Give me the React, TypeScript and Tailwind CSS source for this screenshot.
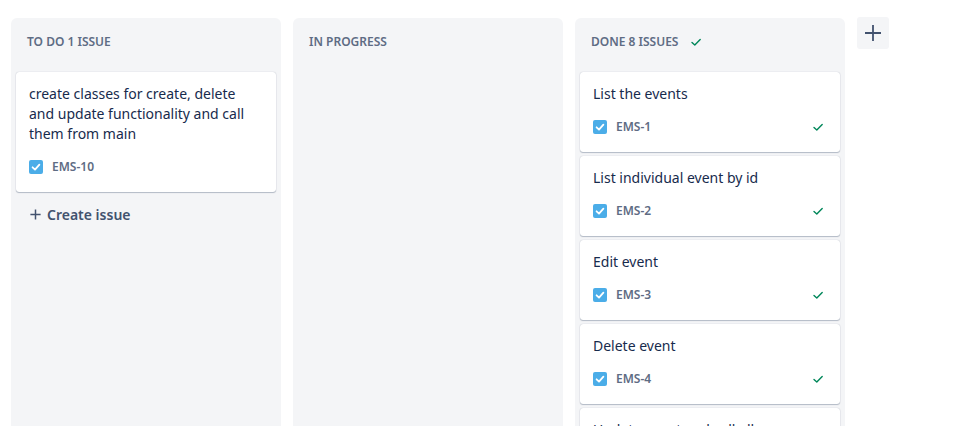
import React from "react";

const font = { fontFamily: '"Segoe UI", "Noto Sans", "Open Sans", sans-serif' };

function TaskIcon() {
  return (
    <svg width="14" height="14" viewBox="0 0 14 14" className="shrink-0">
      <rect x="0" y="0" width="14" height="14" rx="2" fill="#4bade8" />
      <path d="M3.6 7.3 L6 9.6 L10.4 4.6" stroke="#fff" strokeWidth="1.8" fill="none" strokeLinecap="round" strokeLinejoin="round" />
    </svg>
  );
}

function DoneCheck() {
  return (
    <svg width="12" height="12" viewBox="0 0 12 12">
      <path d="M2 6.4 L4.8 9 L10.2 3.4" stroke="#00875a" strokeWidth="1.4" fill="none" strokeLinecap="round" strokeLinejoin="round" />
    </svg>
  );
}

function Card({ title, id, done }: { title: string; id: string; done?: boolean }) {
  return (
    <div className="bg-white rounded-[3px] shadow-[0_1px_1px_rgba(9,30,66,0.25),0_0_1px_rgba(9,30,66,0.31)] pl-[13px] pr-[16px] pt-3 pb-[11px]">
      <div className="text-[14px] leading-5 text-[#172b4d]">{title}</div>
      <div className="mt-[9px] h-[28px] flex items-center">
        <TaskIcon />
        <span className="ml-[9px] text-[12px] font-semibold text-[#5e6c84]">{id}</span>
        <div className="flex-1" />
        {done && <DoneCheck />}
      </div>
    </div>
  );
}

function Header({ children }: { children: React.ReactNode }) {
  return (
    <div className="h-[54px] pl-[11px] pt-4 flex items-start">
      <div className="h-4 flex items-center text-[12px] leading-4 font-semibold text-[#5e6c84] uppercase">{children}</div>
    </div>
  );
}

export default function App() {
  const done = [
    ["List the events", "EMS-1"],
    ["List individual event by id", "EMS-2"],
    ["Edit event", "EMS-3"],
    ["Delete event", "EMS-4"],
    ["Update event and call all", "EMS-5"],
    ["Create event", "EMS-6"],
    ["Connect to database", "EMS-7"],
    ["Set up project", "EMS-8"],
  ];
  return (
    <div className="bg-white w-[965px] h-[426px] overflow-hidden" style={font}>
      <div className="flex items-stretch gap-3 pl-[11px] pt-[18px]">
        <div className="w-[270px] bg-[#f4f5f7] rounded-t-md px-[5px]">
          <Header>TO DO 1 ISSUE</Header>
          <Card title="create classes for create, delete and update functionality and call them from main" id="EMS-10" />
          <div className="mt-1 h-[37px] flex items-center pl-[13px] text-[#42526e]">
            <svg width="13" height="13" viewBox="0 0 14 14">
              <path d="M7 1.5 V12.5 M1.5 7 H12.5" stroke="#42526e" strokeWidth="1.6" />
            </svg>
            <span className="ml-[5px] text-[14px] font-semibold">Create issue</span>
          </div>
        </div>
        <div className="w-[270px] bg-[#f4f5f7] rounded-t-md px-[5px]">
          <Header>IN PROGRESS</Header>
        </div>
        <div className="w-[270px] bg-[#f4f5f7] rounded-t-md px-[5px] pb-2">
          <Header>
            DONE 8 ISSUES
            <span className="ml-[12px] inline-flex"><DoneCheck /></span>
          </Header>
          <div className="flex flex-col gap-1">
            {done.map(([t, i]) => (
              <Card key={i} title={t} id={i} done />
            ))}
          </div>
        </div>
        <div className="self-start -mt-px">
          <div className="w-8 h-8 rounded-[3px] bg-[#f4f5f7] flex items-center justify-center">
            <svg width="20" height="20" viewBox="0 0 20 20">
              <path d="M10 2 V18 M2 10 H18" stroke="#42526e" strokeWidth="1.8" />
            </svg>
          </div>
        </div>
      </div>
    </div>
  );
}
